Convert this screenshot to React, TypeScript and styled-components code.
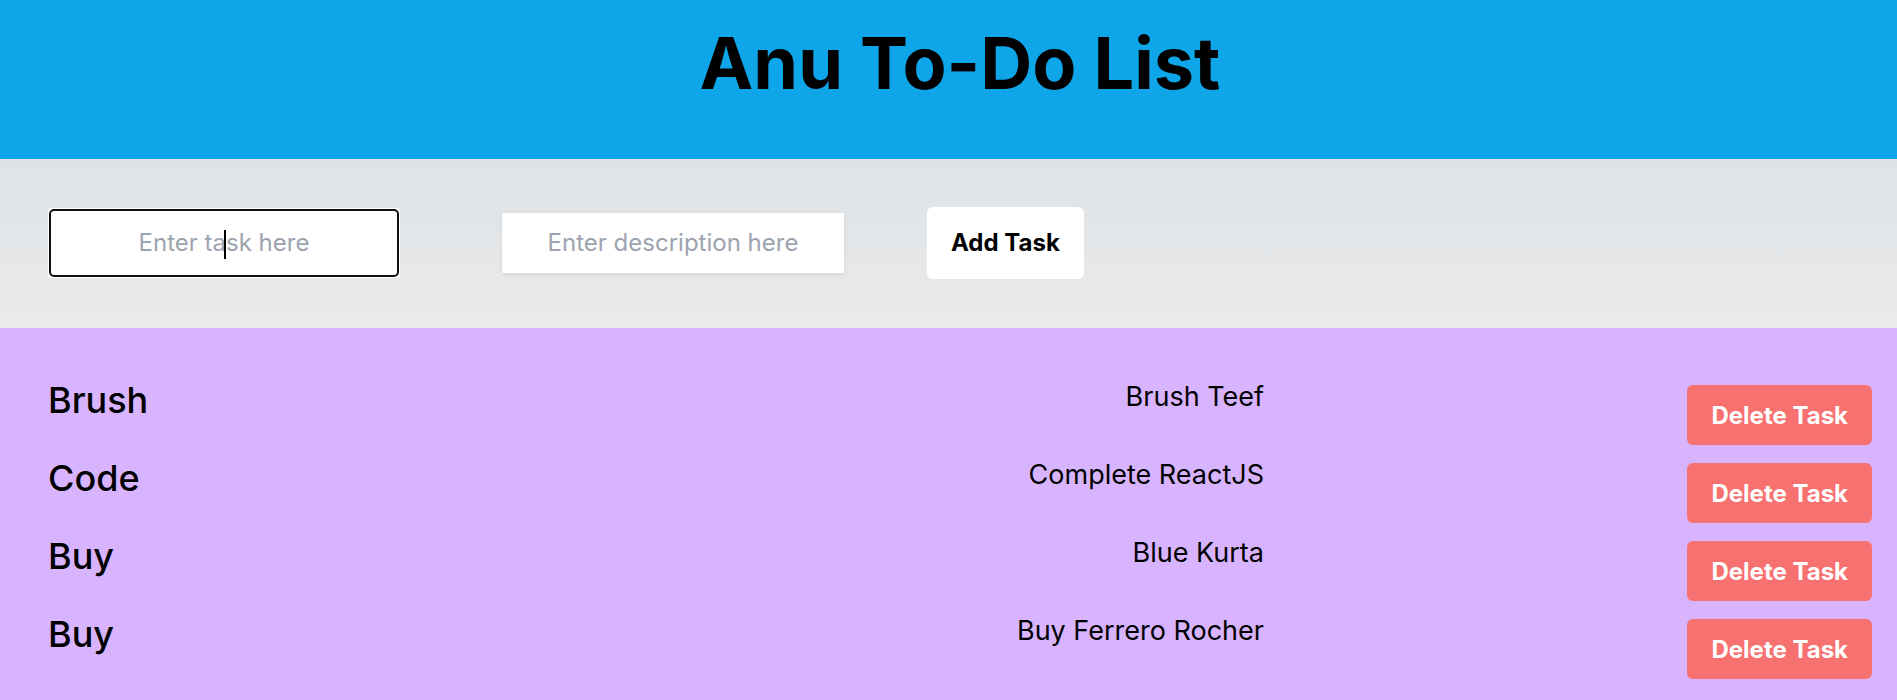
import React from "react";
import styled, { createGlobalStyle } from "styled-components";

const GlobalStyle = createGlobalStyle`
  html, body {
    margin: 0;
    padding: 0;
    overflow: hidden;
  }
  body {
    font-family: Inter, "Noto Sans", sans-serif;
    color: #000;
  }
  *, *::before, *::after {
    box-sizing: border-box;
  }
`;

const Page = styled.div`
  width: 1920px;
  min-height: 700px;
  display: flex;
  flex-direction: column;
  background: #d8b4fe;
`;

const Header = styled.header`
  height: 159px;
  padding-top: 27px;
  background: #0ea5e9;
  text-align: center;
`;

const Title = styled.h1`
  margin: 0;
  font-size: 72px;
  line-height: 72px;
  font-weight: 700;
  color: #000;
`;

const Composer = styled.section`
  height: 169px;
  padding: 0 0 2px 53px;
  display: flex;
  align-items: center;
  background: linear-gradient(180deg, #dfe3e5 0%, #e9eaec 100%);
`;

const Field = styled.div<{ $gap?: number }>`
  position: relative;
  width: 342px;
  height: 60px;
  margin-left: ${(p) => p.$gap ?? 0}px;
`;

const TextInput = styled.input<{ $focused?: boolean }>`
  width: 100%;
  height: 100%;
  border: none;
  border-radius: 1px;
  background: #fff;
  text-align: center;
  font-family: Inter, "Noto Sans", sans-serif;
  font-size: 24px;
  color: #111;
  box-shadow: ${(p) =>
    p.$focused
      ? "0 0 0 2px #fff, 0 3px 0 1px #dcdee2, 0 0 0 5px #fff"
      : "0 0 6px rgba(0, 0, 0, 0.035), 0 3px 6px -1px rgba(0, 0, 0, 0.07)"};
  outline: ${(p) => (p.$focused ? "2px solid #101010" : "none")};
  outline-offset: 2px;
  &::placeholder {
    color: #9ca3af;
  }
`;

const Caret = styled.span`
  position: absolute;
  left: 171px;
  top: 17px;
  width: 2px;
  height: 29px;
  background: #000;
  pointer-events: none;
`;

const AddButton = styled.button`
  margin-left: 83px;
  height: 72px;
  padding: 0 24px;
  border: none;
  border-radius: 6px;
  background: #fff;
  color: #000;
  font-family: Inter, "Noto Sans", sans-serif;
  font-size: 24px;
  font-weight: 700;
  cursor: pointer;
`;

const TaskList = styled.section`
  flex: 1;
  padding: 52px 48px 0 48px;
  display: flex;
  flex-direction: column;
  gap: 13px;
`;

const TaskRow = styled.div`
  display: grid;
  grid-template-columns: repeat(3, 1fr);
  align-items: start;
`;

const TaskTitle = styled.h2`
  margin: 0;
  font-size: 36px;
  line-height: 40px;
  font-weight: 500;
`;

const TaskDesc = styled.p`
  margin: 0;
  padding-top: 1px;
  text-align: right;
  font-size: 27px;
  line-height: 32px;
  font-weight: 400;
`;

const DeleteButton = styled.button`
  justify-self: end;
  margin-top: 5px;
  height: 60px;
  padding: 0 24px;
  border: none;
  border-radius: 6px;
  background: #f87171;
  color: #fff;
  font-family: Inter, "Noto Sans", sans-serif;
  font-size: 24px;
  font-weight: 700;
  cursor: pointer;
`;

const tasks = [
  { title: "Brush", desc: "Brush Teef" },
  { title: "Code", desc: "Complete ReactJS" },
  { title: "Buy", desc: "Blue Kurta" },
  { title: "Buy", desc: "Buy Ferrero Rocher" },
];

export default function App() {
  return (
    <>
      <GlobalStyle />
      <Page>
        <Header>
          <Title>Anu To-Do List</Title>
        </Header>
        <Composer>
          <Field>
            <TextInput $focused placeholder="Enter task here" readOnly />
            <Caret />
          </Field>
          <Field $gap={107}>
            <TextInput placeholder="Enter description here" readOnly />
          </Field>
          <AddButton>Add Task</AddButton>
        </Composer>
        <TaskList>
          {tasks.map((t, i) => (
            <TaskRow key={i}>
              <TaskTitle>{t.title}</TaskTitle>
              <TaskDesc>{t.desc}</TaskDesc>
              <DeleteButton>Delete Task</DeleteButton>
            </TaskRow>
          ))}
        </TaskList>
      </Page>
    </>
  );
}
